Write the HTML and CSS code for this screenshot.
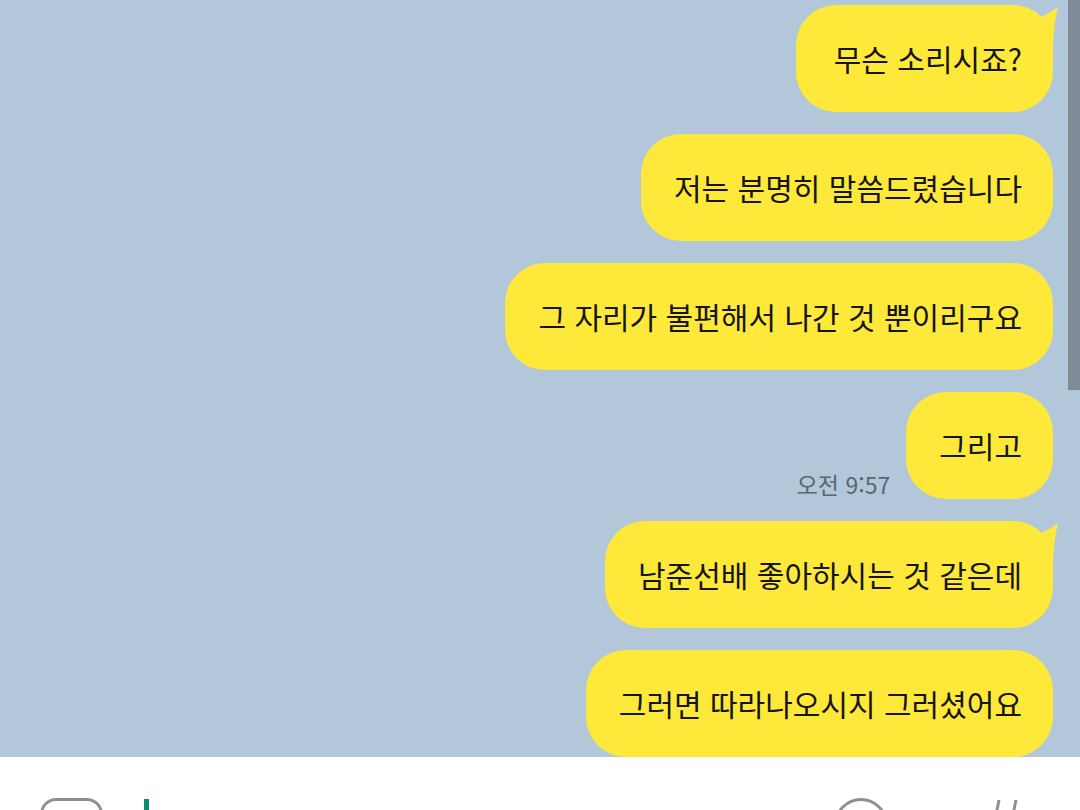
FILE: index.html
```html
<!DOCTYPE html>
<html lang="ko">
<head>
    <meta charset="UTF-8">
    <meta name="viewport" content="width=device-width, initial-scale=1.0">
    <link rel="stylesheet" href="styles.css">
    <title>채팅</title>
</head>
<body>
    <div class="screen">
        <div class="chat">
            <div class="row">
                <div class="bubble short">
                    무슨 소리시죠?
                    <svg class="tail" viewBox="0 0 24 40" width="24" height="40"><path d="M6 12 Q15 8 23 2 Q19 18 18 40 L6 40 Z"/></svg>
                </div>
            </div>
            <div class="row">
                <div class="bubble">저는 분명히 말씀드렸습니다</div>
            </div>
            <div class="row">
                <div class="bubble">그 자리가 불편해서 나간 것 뿐이리구요</div>
            </div>
            <div class="row">
                <span class="time">오전 9:57</span>
                <div class="bubble">그리고</div>
            </div>
            <div class="row">
                <div class="bubble">
                    남준선배 좋아하시는 것 같은데
                    <svg class="tail" viewBox="0 0 24 40" width="24" height="40"><path d="M6 12 Q15 8 23 2 Q19 18 18 40 L6 40 Z"/></svg>
                </div>
            </div>
            <div class="row">
                <div class="bubble">그러면 따라나오시지 그러셨어요</div>
            </div>
        </div>

        <div class="scrollbar"></div>

        <div class="composer">
            <div class="btn-box"></div>
            <div class="cursor"></div>
            <div class="spacer"></div>
            <div class="btn-circle"></div>
            <svg class="hash" viewBox="0 0 40 20" width="40" height="20">
                <line x1="17" y1="0" x2="13" y2="20"/>
                <line x1="34" y1="0" x2="30" y2="20"/>
            </svg>
        </div>
    </div>
</body>
</html>
```

FILE: styles.css
```css
body {
    margin: 0;
    font-family: "Noto Sans CJK KR", "Noto Sans", sans-serif;
    background-color: #b2c7da;
}

.screen {
    position: relative;
    width: 1080px;
    height: 810px;
    overflow: hidden;
    display: flex;
    flex-direction: column;
}

.chat {
    flex-shrink: 0;
    height: 757px;
    overflow: hidden;
    display: flex;
    flex-direction: column;
    gap: 22px;
    padding-top: 5px;
    box-sizing: border-box;
}

.row {
    display: flex;
    justify-content: flex-end;
    align-items: flex-end;
    gap: 16px;
    padding-right: 27px;
}

.bubble {
    position: relative;
    flex-shrink: 0;
    height: 107px;
    line-height: 107px;
    padding: 0 31px 0 33px;
    background-color: #fee93a;
    border-radius: 40px;
    color: #151515;
    font-size: 30px;
    white-space: nowrap;
}

.bubble.short {
    padding-left: 38px;
}

.tail {
    position: absolute;
    top: 0;
    right: -6px;
    fill: #fee93a;
}

.time {
    color: #5a6572;
    font-size: 23px;
    line-height: 28px;
    padding-bottom: 1px;
}

.scrollbar {
    position: absolute;
    top: 0;
    right: 0;
    width: 12px;
    height: 390px;
    background-color: #7f8b97;
}

.composer {
    flex: 1;
    background-color: #ffffff;
    display: flex;
    align-items: flex-start;
    padding: 41px 58px 0 40px;
}

.btn-box {
    flex-shrink: 0;
    width: 63px;
    height: 40px;
    border: 3px solid #8d9094;
    border-radius: 16px;
    box-sizing: border-box;
}

.cursor {
    flex-shrink: 0;
    width: 5px;
    height: 20px;
    margin: 1px 0 0 41px;
    background-color: #0b8a74;
}

.spacer {
    flex: 1;
}

.btn-circle {
    flex-shrink: 0;
    width: 54px;
    height: 54px;
    border: 3px solid #8d9094;
    border-radius: 50%;
    box-sizing: border-box;
}

.hash {
    flex-shrink: 0;
    margin: 2px 0 0 94px;
    stroke: #8d9094;
    stroke-width: 3;
}
```
